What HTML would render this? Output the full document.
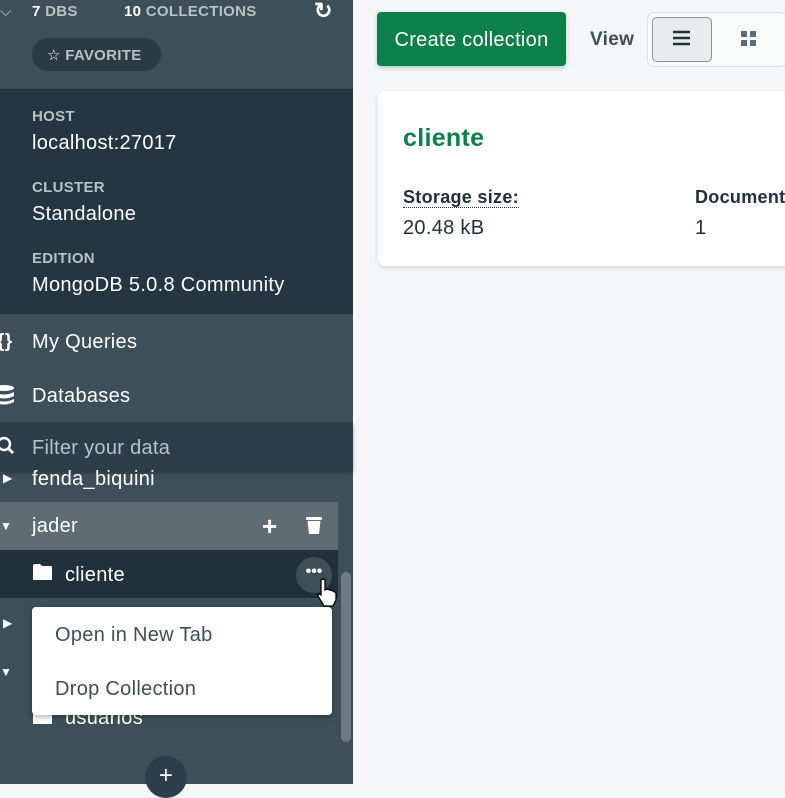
<!DOCTYPE html>
<html><head><meta charset="utf-8"><style>
*{margin:0;padding:0;box-sizing:border-box}
body{width:785px;height:784px;overflow:hidden;font-family:"Liberation Sans",sans-serif;background:#f5f6f7;position:relative;letter-spacing:.3px}
.a{position:absolute}
.sb{left:0;top:0;width:353px;height:784px;background:#3d4f58}
.w{color:#fff}
.lab{color:#b8c4c2;font-size:15px;font-weight:bold}
.val{color:#fff;font-size:20px}
</style></head><body>
<div class="a sb"></div>
<div class="a" style="left:0;color:#ccc;font-size:15px;top:3px">⌵</div>
<div class="a lab" style="left:32px;top:3px"><span style="color:#fff">7</span> DBS</div>
<div class="a lab" style="left:124px;top:3px"><span style="color:#fff">10</span> COLLECTIONS</div>
<div class="a w" style="left:314px;top:-2px;font-size:22px;font-weight:bold">↻</div>
<div class="a" style="left:32px;top:38px;width:129px;height:33px;border-radius:17px;background:#2b3b45;color:#b8c4c2;font-size:15px;font-weight:bold;padding:8px 0 0 15px"><span style="color:#fff;font-weight:normal">☆</span> FAVORITE</div>
<div class="a" style="left:0;top:89px;width:353px;height:225px;background:#243642"></div>
<div class="a lab" style="left:32px;top:108px">HOST</div>
<div class="a val" style="left:32px;top:132px">localhost:27017</div>
<div class="a lab" style="left:32px;top:179px">CLUSTER</div>
<div class="a val" style="left:32px;top:203px">Standalone</div>
<div class="a lab" style="left:32px;top:250px">EDITION</div>
<div class="a val" style="left:32px;top:274px">MongoDB 5.0.8 Community</div>
<div class="a w" style="left:-3px;top:331px;font-size:19px;font-weight:bold">{}</div>
<div class="a val" style="left:32px;top:331px">My Queries</div>
<svg class="a" style="left:0;top:385px" width="14" height="20"><ellipse cx="4" cy="3" rx="10" ry="3" fill="#fff"/><path d="M-6 7 Q4 12 14 7 V11 Q4 16 -6 11Z M-6 14 Q4 19 14 14 V17 Q4 22 -6 17Z" fill="#fff"/></svg>
<div class="a val" style="left:32px;top:385px">Databases</div>
<div class="a" style="left:0;top:422px;width:353px;height:48px;background:#2c3e4a;box-shadow:0 3px 4px rgba(0,0,0,.3)"></div>
<svg class="a" style="left:-4px;top:436px" width="20" height="20"><circle cx="8" cy="8" r="6" stroke="#fff" stroke-width="2.5" fill="none"/><path d="M12 12 L17 17" stroke="#fff" stroke-width="3"/></svg>
<div class="a" style="left:32px;top:437px;font-size:20px;color:#b8c4c2">Filter your data</div>
<div class="a w" style="left:3px;top:471px;font-size:12px">▶</div>
<div class="a val" style="left:32px;top:468px">fenda_biquini</div>
<div class="a" style="left:0;top:502px;width:338px;height:48px;background:#5e6c74"></div>
<div class="a w" style="left:0;top:519px;font-size:12px">▼</div>
<div class="a val" style="left:32px;top:515px">jader</div>
<div class="a w" style="left:262px;top:511px;font-size:26px;font-weight:bold">+</div>
<svg class="a" style="left:305px;top:515px" width="18" height="20"><rect x="1" y="2" width="16" height="3" rx="1" fill="#fff"/><path d="M2.5 6 H15.5 L14 19 H4Z" fill="#fff"/></svg>
<div class="a" style="left:0;top:550px;width:338px;height:48px;background:#21313c"></div>
<svg class="a" style="left:33px;top:564px" width="20" height="17"><path d="M0 2 Q0 0 2 0 H7 L9 2 H18 Q19 2 19 4 V16 H0Z" fill="#fff"/></svg>
<div class="a val" style="left:65px;top:564px">cliente</div>
<div class="a" style="left:296px;top:557px;width:36px;height:36px;border-radius:18px;background:#3d4f58;color:#fff;font-size:16px;font-weight:bold;text-align:center;line-height:30px;letter-spacing:0">•••</div>
<div class="a" style="left:338px;top:572px;width:15px;height:170px;"><div style="margin:0 auto;width:10px;height:170px;border-radius:5px;background:#6e7b82"></div></div>
<svg class="a" style="left:315px;top:578px" width="24" height="30"><path d="M6 2 Q8 0 10 2 V12 L12 11 L15 12 L18 13 L21 15 V22 L18 28 H9 L3 18 Q3 15 6 17 Z" fill="#fff" stroke="#000" stroke-width="1.3"/></svg>
<div class="a w" style="left:3px;top:616px;font-size:12px">▶</div>
<div class="a w" style="left:0;top:665px;font-size:12px">▼</div>
<div class="a" style="left:33px;top:709px;width:19px;height:15px;background:#fff"></div>
<div class="a val" style="left:65px;top:707px">usuarios</div>
<div class="a" style="left:32px;top:607px;width:300px;height:108px;background:#fff;border-radius:4px;box-shadow:0 2px 6px rgba(0,0,0,.3)"></div>
<div class="a" style="left:55px;top:624px;font-size:20px;color:#3d4f58">Open in New Tab</div>
<div class="a" style="left:55px;top:678px;font-size:20px;color:#3d4f58">Drop Collection</div>
<div class="a" style="left:145px;top:756px;width:42px;height:42px;border-radius:21px;background:#2c3e4a;color:#fff;font-size:24px;text-align:center;line-height:40px">+</div>
<div class="a" style="left:377px;top:12px;width:189px;height:54px;background:#0b8049;border-radius:4px;box-shadow:0 2px 4px rgba(11,128,73,.3);color:#fff;font-size:20px;line-height:56px;text-align:center">Create collection</div>
<div class="a" style="left:590px;top:29px;font-size:19px;font-weight:bold;color:#3d4f58">View</div>
<div class="a" style="left:647px;top:12px;width:140px;height:55px;border:1px solid #dcdfe1;border-radius:7px;background:#f9fafa"></div>
<div class="a" style="left:652px;top:17px;width:60px;height:45px;border:1px solid #889397;border-radius:5px;background:#e8ecec"></div>
<svg class="a" style="left:672px;top:30px" width="20" height="18"><path d="M1 2H18M1 8H18M1 14H18" stroke="#21313c" stroke-width="2.5"/></svg>
<svg class="a" style="left:741px;top:31px" width="16" height="16"><rect x="0" y="0" width="6" height="6" fill="#5d6c74"/><rect x="9" y="0" width="6" height="6" fill="#5d6c74"/><rect x="0" y="9" width="6" height="6" fill="#5d6c74"/><rect x="9" y="9" width="6" height="6" fill="#5d6c74"/></svg>
<div class="a" style="left:378px;top:91px;width:420px;height:175px;background:#fff;border-radius:7px;box-shadow:0 2px 5px rgba(0,0,0,.12)"></div>
<div class="a" style="left:403px;top:124px;font-size:25px;font-weight:bold;color:#0b8049">cliente</div>
<div class="a" style="left:403px;top:187px;font-size:18px;font-weight:bold;color:#21313c;border-bottom:1px dotted #21313c;line-height:20px">Storage size:</div>
<div class="a" style="left:403px;top:217px;font-size:20px;color:#21313c">20.48 kB</div>
<div class="a" style="left:695px;top:187px;font-size:18px;font-weight:bold;color:#21313c">Documents:</div>
<div class="a" style="left:695px;top:217px;font-size:20px;color:#21313c">1</div>
</body></html>
